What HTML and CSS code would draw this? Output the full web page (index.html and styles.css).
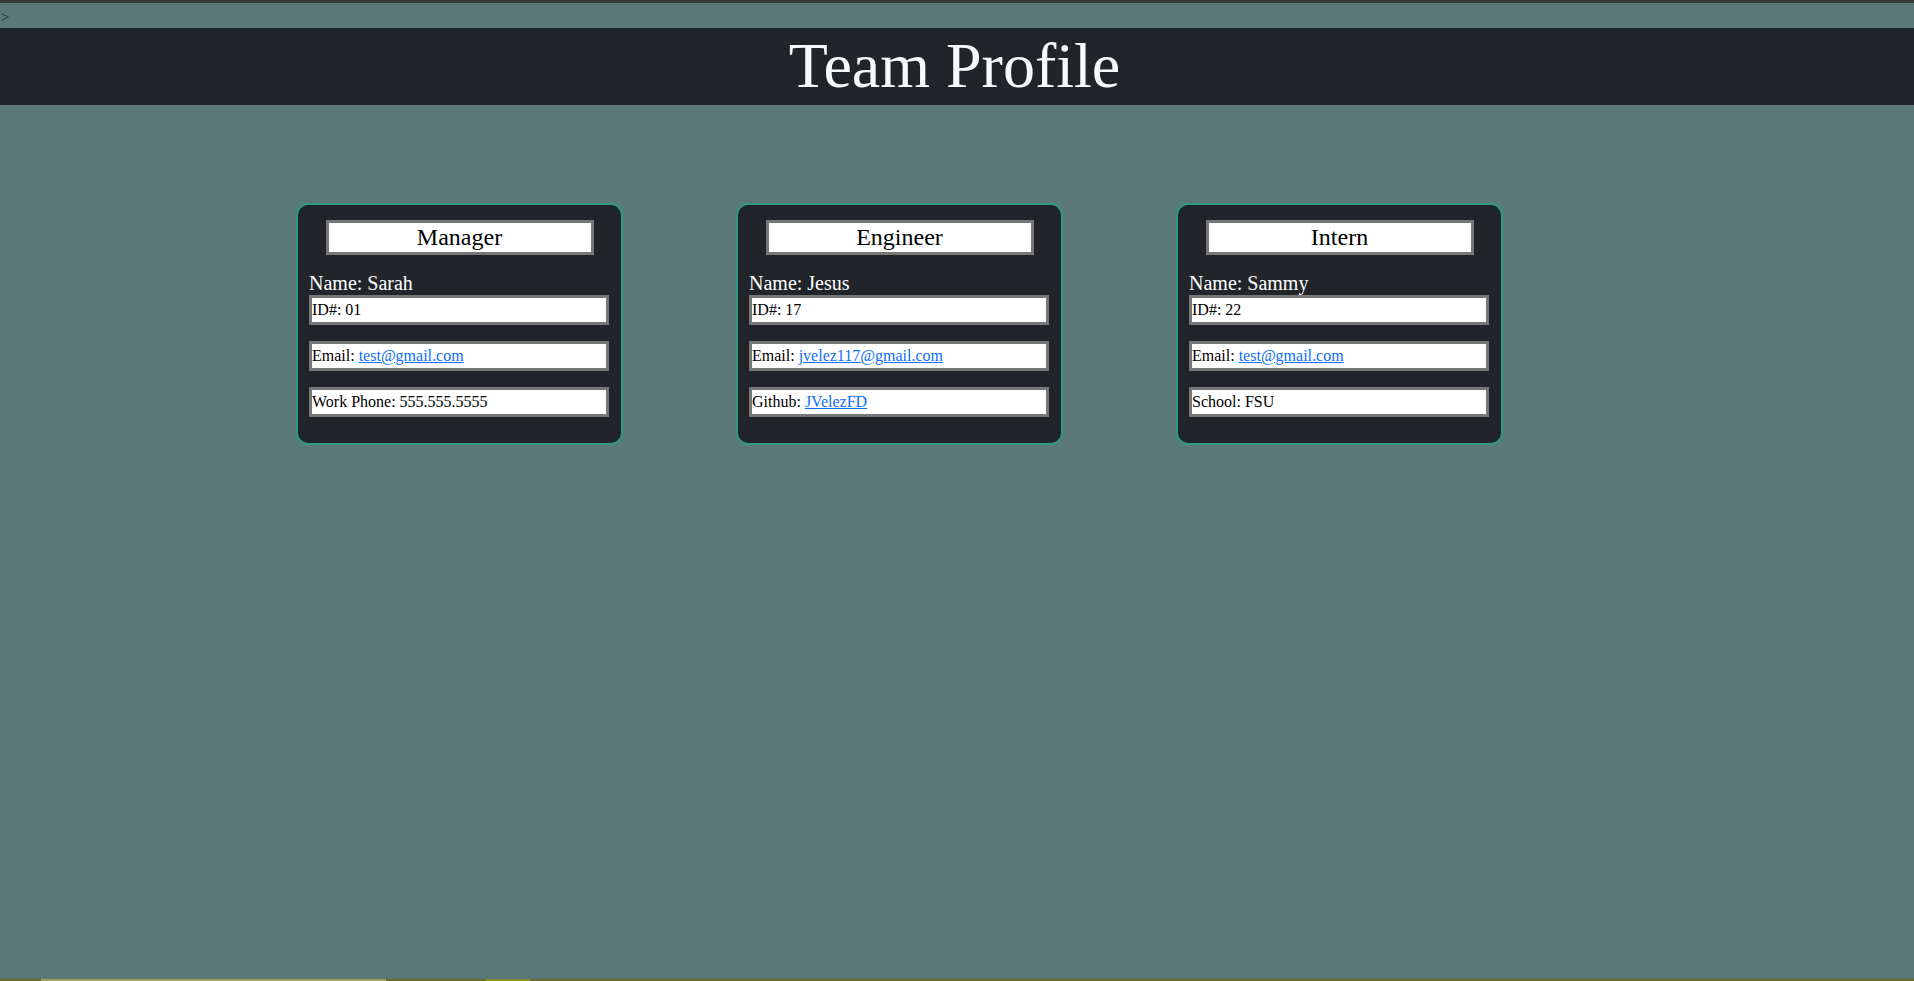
FILE: index.html
```html
<!DOCTYPE html>
<html lang="en">
<head>
<meta charset="UTF-8">
<title>Team Profile</title>
<link rel="stylesheet" href="styles.css">
</head>
<body>
<div class="topline"></div>
<div class="stray">&gt;</div>
<header class="header">
  <h1 class="title">Team Profile</h1>
</header>
<main class="cards">
  <section class="card">
    <h2 class="role">Manager</h2>
    <p class="name">Name: Sarah</p>
    <div class="field">ID#: 01</div>
    <div class="field">Email: <a href="mailto:test@gmail.com">test@gmail.com</a></div>
    <div class="field">Work Phone: 555.555.5555</div>
  </section>
  <section class="card">
    <h2 class="role">Engineer</h2>
    <p class="name">Name: Jesus</p>
    <div class="field">ID#: 17</div>
    <div class="field">Email: <a href="mailto:jvelez117@gmail.com">jvelez117@gmail.com</a></div>
    <div class="field">Github: <a href="#">JVelezFD</a></div>
  </section>
  <section class="card">
    <h2 class="role">Intern</h2>
    <p class="name">Name: Sammy</p>
    <div class="field">ID#: 22</div>
    <div class="field">Email: <a href="mailto:test@gmail.com">test@gmail.com</a></div>
    <div class="field">School: FSU</div>
  </section>
</main>
<div class="bottomstrip">
  <span class="seg seg-a"></span>
  <span class="seg seg-b"></span>
  <span class="seg seg-c"></span>
  <span class="seg seg-d"></span>
  <span class="seg seg-e"></span>
</div>
</body>
</html>
```

FILE: styles.css
```css
html, body {
  margin: 0;
  padding: 0;
}
body {
  background: #5a7878;
  font-family: "Liberation Serif", "Times New Roman", serif;
  color: #000;
  min-height: 981px;
}
.topline {
  height: 3px;
  background: #3a3d40;
}
.stray {
  box-sizing: border-box;
  height: 25px;
  padding: 7px 0 0 1px;
  font-size: 15px;
  line-height: 15px;
  color: #1a1a1a;
}
.header {
  background: #212529;
  height: 77px;
  padding-right: 5px;
}
.title {
  margin: 0;
  font-size: 64px;
  font-weight: normal;
  line-height: 76px;
  text-align: center;
  color: #f8f9fa;
}
.cards {
  display: flex;
  gap: 113px;
  padding-left: 296px;
  padding-top: 98px;
}
.card {
  box-sizing: border-box;
  width: 327px;
  background: #212529;
  border: 2px solid #2f9a80;
  border-radius: 12px;
  padding: 15px 11px 26px 11px;
}
.role {
  box-sizing: border-box;
  width: 268px;
  margin: 0 auto;
  background: #fff;
  border: 3px solid #777;
  font-size: 24px;
  font-weight: normal;
  line-height: 29px;
  text-align: center;
  color: #000;
}
.name {
  margin: 17px 0 0 0;
  font-size: 20px;
  line-height: 23px;
  color: #fff;
}
.field {
  box-sizing: border-box;
  width: 300px;
  height: 30px;
  background: #fff;
  border: 3px solid #777;
  font-size: 16px;
  line-height: 18px;
  padding: 3px 0;
  margin-bottom: 16px;
}
.field:last-child {
  margin-bottom: 0;
}
.field a {
  color: #0d6efd;
  text-decoration: underline;
}
.bottomstrip {
  position: fixed;
  left: 0;
  right: 0;
  bottom: 0;
  height: 2px;
  display: flex;
  background: #6b6a30;
}
.seg { display: block; height: 2px; }
.seg-a { width: 41px; }
.seg-b { width: 345px; background: #9e9d62; }
.seg-c { width: 100px; }
.seg-d { width: 44px; background: #8f8c2e; }
.seg-e { flex: 1; }
```
